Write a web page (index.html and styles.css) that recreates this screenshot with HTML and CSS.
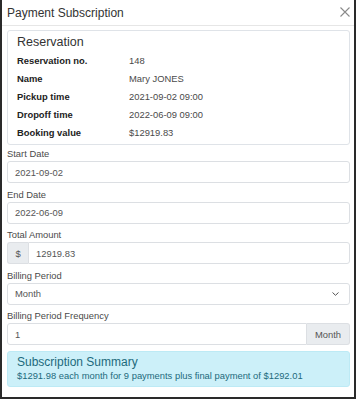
FILE: index.html
```html
<!DOCTYPE html>
<html lang="en">
<head>
  <meta charset="UTF-8" />
  <title>Payment Subscription</title>
  <link rel="stylesheet" href="styles.css">
</head>
<body>
  <div class="modal">
    <header class="modal-header">
      <h1>Payment Subscription</h1>
      <button class="close" type="button" aria-label="Close">
        <svg width="10" height="10" viewBox="0 0 10 10"><path d="M0.5 0.5 L9.5 9.5 M9.5 0.5 L0.5 9.5" stroke="#8a8a8a" stroke-width="1.1" fill="none"/></svg>
      </button>
    </header>

    <div class="modal-body">
      <div class="card">
        <h2>Reservation</h2>
        <div class="info-row"><b>Reservation no.</b><span>148</span></div>
        <div class="info-row"><b>Name</b><span>Mary JONES</span></div>
        <div class="info-row"><b>Pickup time</b><span>2021-09-02 09:00</span></div>
        <div class="info-row"><b>Dropoff time</b><span>2022-06-09 09:00</span></div>
        <div class="info-row"><b>Booking value</b><span>$12919.83</span></div>
      </div>

      <div class="form-group">
        <label>Start Date</label>
        <input type="text" value="2021-09-02" />
      </div>

      <div class="form-group">
        <label>End Date</label>
        <input type="text" value="2022-06-09" />
      </div>

      <div class="form-group">
        <label>Total Amount</label>
        <div class="input-group">
          <span class="addon addon-left">$</span>
          <input type="text" value="12919.83" />
        </div>
      </div>

      <div class="form-group">
        <label>Billing Period</label>
        <div class="select-wrap">
          <select>
            <option>Month</option>
          </select>
          <svg class="caret" width="7" height="4" viewBox="0 0 7 4"><path d="M0.5 0.5 L3.5 3.3 L6.5 0.5" stroke="#555" stroke-width="1" fill="none"/></svg>
        </div>
      </div>

      <div class="form-group">
        <label>Billing Period Frequency</label>
        <div class="input-group">
          <input type="text" value="1" />
          <span class="addon addon-right">Month</span>
        </div>
      </div>

      <div class="alert">
        <h3>Subscription Summary</h3>
        <p>$1291.98 each month for 9 payments plus final payment of $1292.01</p>
      </div>
    </div>
  </div>
</body>
</html>
```

FILE: styles.css
```css
body {
  margin: 0;
  background: #fff;
  font-family: 'Liberation Sans', Arial, sans-serif;
  color: #333;
}

.modal {
  width: 356px;
  height: 399px;
  box-sizing: border-box;
  border-left: 2px solid #2a2a2a;
  border-right: 2px solid #2a2a2a;
  border-bottom: 2px solid #2a2a2a;
  background: #fff;
}

.modal-header {
  height: 26px;
  box-sizing: border-box;
  border-bottom: 1px solid #e6e6e6;
  display: flex;
  align-items: center;
  justify-content: space-between;
  padding: 0 4px 0 5px;
}

.modal-header h1 {
  margin: 0;
  font-size: 12px;
  font-weight: normal;
  color: #333;
}

.close {
  border: none;
  background: none;
  padding: 0;
  width: 10px;
  height: 10px;
  display: flex;
  margin-top: -2px;
}

.modal-body {
  padding: 4px 4px 0 5px;
}

.card {
  border: 1px solid #dfe3e8;
  border-radius: 3px;
  padding: 2px 9px 2px 9px;
}

.card h2 {
  margin: 0 0 1px;
  font-size: 12.5px;
  font-weight: normal;
  line-height: 18px;
  color: #333;
}

.info-row {
  display: grid;
  grid-template-columns: 112px 1fr;
  font-size: 9.4px;
  line-height: 18px;
}

.info-row b {
  color: #222;
}

.info-row span {
  color: #4a4a4a;
}

.form-group {
  margin-bottom: 4.5px;
}

.card + .form-group {
  margin-top: 2px;
}

label {
  display: block;
  font-size: 9.4px;
  line-height: 13px;
  margin-bottom: 1px;
  color: #4a4a4a;
}

input, select {
  display: block;
  width: 100%;
  height: 22px;
  box-sizing: border-box;
  border: 1px solid #dcdfe3;
  border-radius: 3px;
  padding: 0 7px;
  font-family: inherit;
  font-size: 9.4px;
  color: #555;
  background: #fff;
  margin: 0;
}

select {
  appearance: none;
  -webkit-appearance: none;
}

.select-wrap {
  position: relative;
}

.caret {
  position: absolute;
  right: 11px;
  top: 9px;
}

.input-group {
  display: flex;
}

.input-group input {
  flex: 1;
  min-width: 0;
}

.addon {
  display: flex;
  align-items: center;
  justify-content: center;
  height: 22px;
  box-sizing: border-box;
  background: #e9ecef;
  border: 1px solid #dcdfe3;
  font-size: 9.4px;
  color: #555;
}

.addon-left {
  width: 21px;
  border-right: none;
  border-radius: 3px 0 0 3px;
}

.addon-left + input {
  border-radius: 0 3px 3px 0;
}

.addon-right {
  width: 43px;
  border-left: none;
  border-radius: 0 3px 3px 0;
}

.input-group input:first-child {
  border-radius: 3px 0 0 3px;
}

.alert {
  margin-top: 6px;
  background: #ccf0f9;
  border: 1px solid #bdeaf5;
  border-radius: 3px;
  padding: 3px 9px;
  color: #1d6a7c;
}

.alert h3 {
  margin: 0;
  font-size: 12px;
  font-weight: normal;
  line-height: 14px;
}

.alert p {
  margin: 0;
  font-size: 9.4px;
  line-height: 14px;
}
```
